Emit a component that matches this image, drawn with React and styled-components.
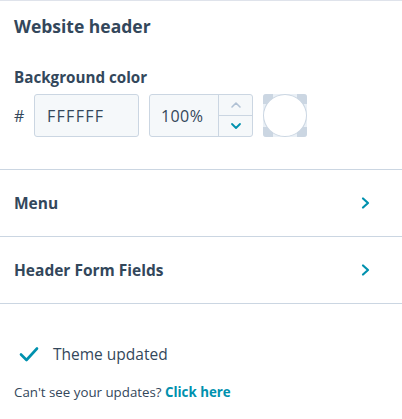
import React from "react";
import styled, { createGlobalStyle } from "styled-components";

const Global = createGlobalStyle`
  html, body { margin: 0; padding: 0; background: #fff; }
  body { font-family: "Open Sans", "Noto Sans", sans-serif; color: #33475b; }
  * { box-sizing: border-box; }
`;

const Panel = styled.div`
  width: 402px;
  height: 419px;
  border-top: 1px solid #dfe3eb;
  display: flex;
  flex-direction: column;
  background: #fff;
`;

const Section = styled.div`
  padding: 13px 14px 32px;
  border-bottom: 1px solid #cbd6e2;
`;

const Title = styled.h2`
  margin: 0;
  font-size: 17.5px;
  font-weight: 700;
  line-height: 24px;
  color: #33475b;
`;

const Label = styled.div`
  margin-top: 28px;
  font-size: 15.2px;
  font-weight: 700;
  line-height: 22px;
  color: #33475b;
`;

const ColorRow = styled.div`
  margin-top: 6px;
  display: flex;
  align-items: center;
  gap: 10px;
`;

const Hash = styled.span`
  width: 10px;
  font-size: 16px;
  color: #33475b;
`;

const Input = styled.div`
  height: 43px;
  width: ${(p) => p.w}px;
  border: 1px solid #cbd6e2;
  border-radius: 3px;
  background: #f5f8fa;
  display: flex;
  align-items: center;
  padding: 0 ${(p) => p.pad}px;
  font-size: 16px;
  letter-spacing: 1.3px;
  color: #33475b;
`;

const PercentBox = styled.div`
  height: 43px;
  width: 104px;
  border: 1px solid #cbd6e2;
  border-radius: 3px;
  background: #f5f8fa;
  display: flex;
  font-size: 16px;
  color: #33475b;
`;

const PercentText = styled.div`
  flex: 1;
  display: flex;
  align-items: center;
  padding-left: 11px;
  letter-spacing: 0.4px;
`;

const Stepper = styled.div`
  width: 34px;
  border-left: 1px solid #cbd6e2;
  display: flex;
  flex-direction: column;
`;

const Step = styled.div`
  flex: 1;
  display: flex;
  align-items: center;
  justify-content: center;
  & + & { border-top: 1px solid #cbd6e2; }
`;

const Swatch = styled.div`
  position: relative;
  width: 44px;
  height: 43px;
  border-radius: 3px;
  background: #eaf0f6;
  overflow: hidden;
`;

const Corner = styled.span`
  position: absolute;
  width: 10px;
  height: 10px;
  background: #cbd6e2;
  ${(p) => (p.t ? "top: 0;" : "bottom: 0;")}
  ${(p) => (p.l ? "left: 0;" : "right: 0;")}
`;

const Circle = styled.span`
  position: absolute;
  inset: 0;
  border-radius: 50%;
  background: #fff;
  border: 1px solid #cbd6e2;
`;

const Row = styled.div`
  height: 67px;
  padding: 0 30px 0 14px;
  border-bottom: 1px solid #cbd6e2;
  display: flex;
  align-items: center;
  justify-content: space-between;
  font-size: 15.5px;
  font-weight: 700;
  color: #33475b;
`;

const Footer = styled.div`
  padding: 32px 14px 0;
`;

const Status = styled.div`
  display: flex;
  align-items: center;
  gap: 14px;
  padding-left: 5px;
  font-size: 15.5px;
  color: #33475b;
  height: 36px;
`;

const Hint = styled.div`
  margin-top: 11px;
  font-size: 13.3px;
  color: #33475b;
`;

const Link = styled.a`
  color: #0091ae;
  font-weight: 700;
  text-decoration: none;
`;

const Chevron = ({ dir = "right", size = 14, color = "#0091ae", w = 2.2 }) => {
  const d = {
    right: "M5 2.5 L10 7 L5 11.5",
    up: "M3 9 L7 5 L11 9",
    down: "M3 5 L7 9 L11 5",
  }[dir];
  return (
    <svg width={size} height={size} viewBox="0 0 14 14">
      <path d={d} fill="none" stroke={color} strokeWidth={w} strokeLinecap="round" strokeLinejoin="round" />
    </svg>
  );
};

export default function App() {
  return (
    <>
      <Global />
      <Panel>
        <Section>
          <Title>Website header</Title>
          <Label>Background color</Label>
          <ColorRow>
            <Hash>#</Hash>
            <Input w={105} pad={12}>FFFFFF</Input>
            <PercentBox>
              <PercentText>100%</PercentText>
              <Stepper>
                <Step><Chevron dir="up" size={14} color="#b0c1d4" w={1.6} /></Step>
                <Step><Chevron dir="down" size={14} color="#0091ae" w={1.8} /></Step>
              </Stepper>
            </PercentBox>
            <Swatch>
              <Corner t l />
              <Corner t />
              <Corner l />
              <Corner />
              <Circle />
            </Swatch>
          </ColorRow>
        </Section>
        <Row>
          Menu
          <Chevron />
        </Row>
        <Row>
          Header Form Fields
          <Chevron />
        </Row>
        <Footer>
          <Status>
            <svg width="20" height="16" viewBox="0 0 20 16">
              <path d="M2 8.5 L7.5 14 L18 2.5" fill="none" stroke="#0091ae" strokeWidth="2.6" strokeLinecap="round" strokeLinejoin="round" />
            </svg>
            Theme updated
          </Status>
          <Hint>
            Can't see your updates? <Link href="#">Click here</Link>
          </Hint>
        </Footer>
      </Panel>
    </>
  );
}
